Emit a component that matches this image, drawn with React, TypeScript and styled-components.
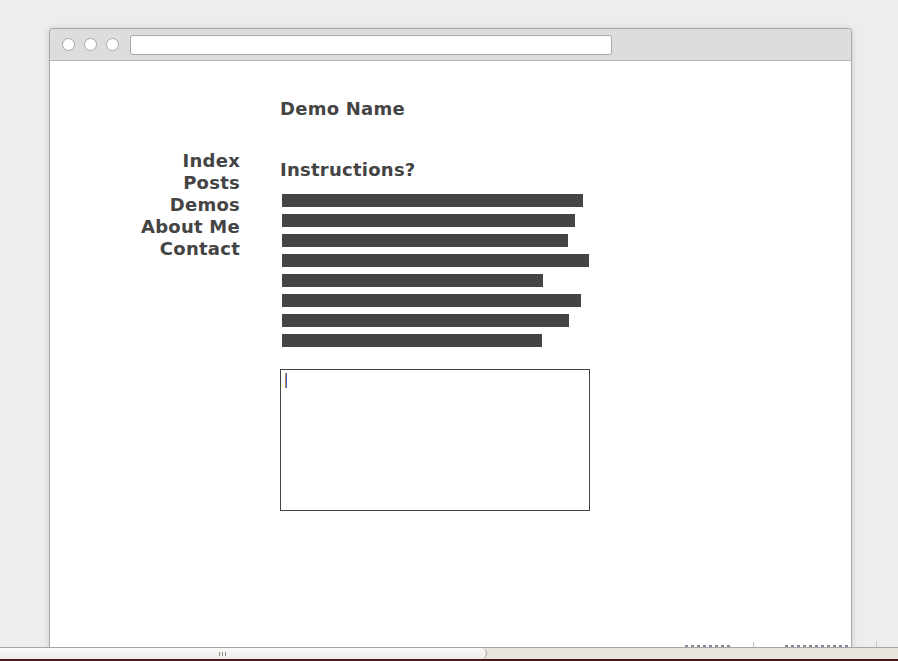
import React from "react";
import styled, { createGlobalStyle } from "styled-components";

const Global = createGlobalStyle`
  html, body { margin: 0; padding: 0; }
  body {
    background: #ededed;
    overflow: hidden;
    font-family: "DejaVu Sans", "Liberation Sans", sans-serif;
  }
`;

const Page = styled.div`
  height: 661px;
  padding: 28px 0 0 49px;
  box-sizing: border-box;
`;

const Window = styled.div`
  width: 803px;
  height: 640px;
  box-sizing: border-box;
  border: 1px solid #a9a9a9;
  border-bottom: none;
  border-radius: 4px 4px 0 0;
  background: #fff;
  box-shadow: 0 1px 6px rgba(0, 0, 0, 0.16);
  display: flex;
  flex-direction: column;
  overflow: hidden;
`;

const TitleBar = styled.div`
  height: 31px;
  flex: none;
  background: #dddddd;
  border-bottom: 1px solid #b8b8b8;
  display: flex;
  align-items: center;
  padding: 0 0 0 12px;
  gap: 9px;
`;

const Dot = styled.span`
  width: 11px;
  height: 11px;
  border-radius: 50%;
  background: #fff;
  border: 1px solid #a8a8a8;
  flex: none;
`;

const UrlBar = styled.div`
  width: 480px;
  height: 18px;
  margin-left: 2px;
  background: #fff;
  border: 1px solid #a8a8a8;
  border-radius: 3px;
`;

const Content = styled.div`
  display: grid;
  grid-template-columns: 190px 310px;
  column-gap: 40px;
  color: #444;
`;

const Nav = styled.nav`
  padding-top: 89px;
  display: flex;
  flex-direction: column;
  align-items: flex-end;
`;

const NavLink = styled.a`
  font-weight: bold;
  font-size: 18px;
  line-height: 22px;
  letter-spacing: 0.25px;
  color: #444;
  text-decoration: none;
`;

const Main = styled.main`
  padding-top: 37px;
  display: flex;
  flex-direction: column;
`;

const Heading = styled.h2<{ $gap: number }>`
  margin: 0 0 ${(p) => p.$gap}px 0;
  font-size: 18px;
  line-height: 22px;
  letter-spacing: 0.25px;
  font-weight: bold;
  color: #444;
`;

const Bars = styled.div`
  display: flex;
  flex-direction: column;
  gap: 7px;
  padding-left: 2px;
  margin-bottom: 22px;
`;

const Bar = styled.div`
  height: 13px;
  background: #444;
`;

const TextBox = styled.div`
  width: 310px;
  height: 142px;
  box-sizing: border-box;
  border: 1px solid #444;
  padding: 3px 0 0 4px;
`;

const Caret = styled.span`
  display: block;
  width: 2px;
  height: 15px;
  background: linear-gradient(90deg, #c08a4a 0 50%, #3b63c8 50% 100%);
`;

const Status = styled.div`
  position: fixed;
  left: 0;
  right: 0;
  bottom: 14px;
  height: 5px;
`;

const StatusFrag = styled.span<{ $x: number; $w: number }>`
  position: absolute;
  left: ${(p) => p.$x}px;
  bottom: 0;
  width: ${(p) => p.$w}px;
  height: 2px;
  background: repeating-linear-gradient(
    90deg,
    #7d8aa0 0 3px,
    transparent 3px 6px
  );
`;

const StatusSep = styled.span<{ $x: number }>`
  position: absolute;
  left: ${(p) => p.$x}px;
  top: 0;
  width: 1px;
  height: 5px;
  background: #c4c4c4;
`;

const Scrollbar = styled.div`
  position: fixed;
  left: 0;
  right: 0;
  bottom: 0;
  height: 14px;
  box-sizing: border-box;
  border-top: 1px solid #a9a59e;
  border-bottom: 2px solid #4a1818;
  background: #e8e4de;
`;

const Thumb = styled.div`
  width: 487px;
  height: 100%;
  box-sizing: border-box;
  background: linear-gradient(#faf9f8, #efedea);
  border-right: 1px solid #a6a29b;
  border-radius: 0 6px 6px 0;
  display: flex;
  align-items: center;
  padding-left: 219px;
  gap: 2px;
`;

const Grip = styled.span`
  width: 1px;
  height: 4px;
  background: #8a8782;
`;

const widths = [301, 293, 286, 307, 261, 299, 287, 260];
const links = ["Index", "Posts", "Demos", "About Me", "Contact"];

export default function App() {
  return (
    <>
      <Global />
      <Page>
        <Window>
          <TitleBar>
            <Dot />
            <Dot />
            <Dot />
            <UrlBar />
          </TitleBar>
          <Content>
            <Nav>
              {links.map((l) => (
                <NavLink key={l} href="#">
                  {l}
                </NavLink>
              ))}
            </Nav>
            <Main>
              <Heading $gap={39}>Demo Name</Heading>
              <Heading $gap={13}>Instructions?</Heading>
              <Bars>
                {widths.map((w, i) => (
                  <Bar key={i} style={{ width: w }} />
                ))}
              </Bars>
              <TextBox role="textbox">
                <Caret />
              </TextBox>
            </Main>
          </Content>
        </Window>
      </Page>
      <Status>
        <StatusFrag $x={685} $w={45} />
        <StatusSep $x={753} />
        <StatusFrag $x={785} $w={66} />
        <StatusSep $x={876} />
      </Status>
      <Scrollbar>
        <Thumb>
          <Grip />
          <Grip />
          <Grip />
        </Thumb>
      </Scrollbar>
    </>
  );
}
